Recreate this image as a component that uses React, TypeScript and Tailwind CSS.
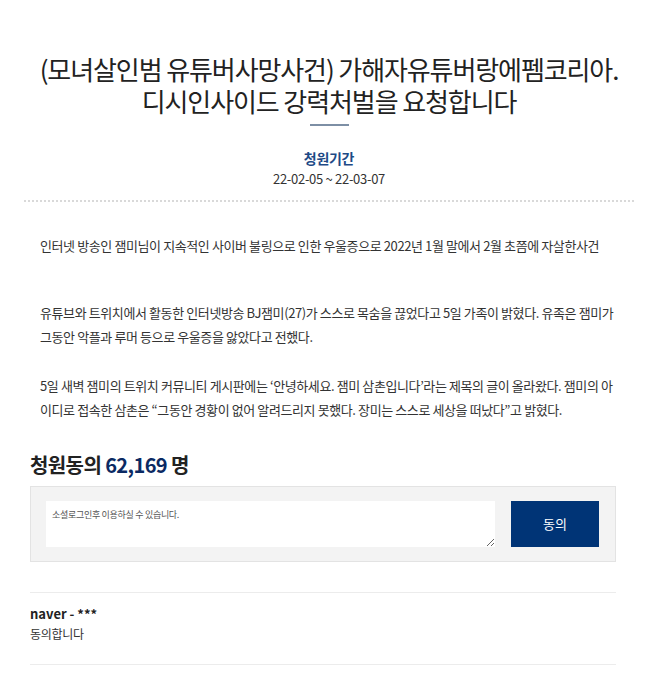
export default function App() {
  const font = { fontFamily: '"Noto Sans CJK KR", "Noto Sans", sans-serif' }
  return (
    <div className="min-h-[679px] w-[658px] bg-white text-[#222]" style={font}>
      <div className="flex flex-col items-center pt-[53px]">
        <h1 className="whitespace-nowrap text-center text-[26px] font-normal leading-[32px] tracking-[-1.1px] text-[#222]">
          (모녀살인범 유튜버사망사건) 가해자유튜버랑에펨코리아.
          <br />
          디시인사이드 강력처벌을 요청합니다
        </h1>
        <div className="mt-[7px] h-[2px] w-[39px] bg-[#7d8fa5]" />
        <div className="mt-[22px] text-[14px] font-bold leading-[20px] tracking-[-0.3px] text-[#1e4a86]">청원기간</div>
        <div className="mt-[1px] text-[13px] leading-[20px] tracking-[-0.3px] text-[#333]">22-02-05 ~ 22-03-07</div>
      </div>
      <div className="mx-[24px] mt-[11px] border-t-2 border-dotted border-[#d9d9d9]" />

      <div className="whitespace-nowrap px-[40px] pt-[32px] text-[13px] leading-[24px] tracking-[-0.4px] text-[#333]">
        <p>인터넷 방송인 잼미님이 지속적인 사이버 불링으로 인한 우울증으로 2022년 1월 말에서 2월 초쯤에 자살한사건</p>
        <p className="mt-[43px]">
          유튜브와 트위치에서 활동한 인터넷방송 BJ잼미(27)가 스스로 목숨을 끊었다고 5일 가족이 밝혔다. 유족은 잼미가
          <br />
          그동안 악플과 루머 등으로 우울증을 앓았다고 전했다.
        </p>
        <p className="mt-[25px]">
          5일 새벽 잼미의 트위치 커뮤니티 게시판에는 ‘안녕하세요. 잼미 삼촌입니다’라는 제목의 글이 올라왔다. 잼미의 아
          <br />
          이디로 접속한 삼촌은 “그동안 경황이 없어 알려드리지 못했다. 장미는 스스로 세상을 떠났다”고 밝혔다.
        </p>
      </div>

      <div className="w-[646px] px-[30px] pt-[29px]">
        <h2 className="text-[20px] font-bold leading-[28px] tracking-[-0.6px] text-[#222]">
          청원동의 <span className="text-[#0b2a63]">62,169</span> 명
        </h2>
        <div className="mt-[7px] flex gap-[16px] border border-[#e3e3e3] bg-[#f3f3f3] py-[14px] pl-[15px] pr-[16px]">
          <textarea
            className="h-[46px] flex-1 resize-y bg-white px-[6px] py-[8px] text-[9px] leading-[12px] tracking-[-0.3px] text-[#555] outline-none placeholder:text-[#555]"
            placeholder="소셜로그인후 이용하실 수 있습니다."
          />
          <button className="h-[46px] w-[88px] bg-[#003476] text-[13px] text-white">동의</button>
        </div>

        <div className="mt-[30px] border-t border-[#ececec]" />
        <div className="pt-[11px] pb-[20px]">
          <div className="text-[13px] font-bold leading-[20px] text-[#222]">naver - ***</div>
          <div className="text-[12px] leading-[20px] tracking-[-0.3px] text-[#333]">동의합니다</div>
        </div>
        <div className="border-t border-[#ececec]" />
      </div>
    </div>
  )
}
